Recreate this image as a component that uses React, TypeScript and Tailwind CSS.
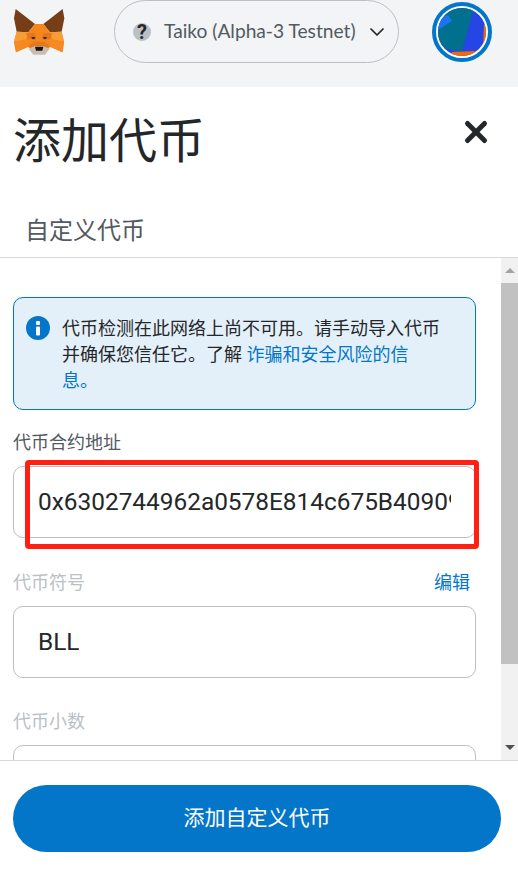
import { ChevronDown, X } from 'lucide-react'

function FoxLogo() {
  return (
    <svg width="80" height="70" viewBox="0 0 240 210">
      <polygon points="47,27 105,72 85,97 50,95 42,55" fill="#763D16" />
      <polygon points="188,27 130,72 150,97 185,95 193,55" fill="#763D16" />
      <polygon points="50,95 85,97 105,72 130,72 150,97 185,95 192,125 188,157 150,140 135,160 100,160 85,140 48,157 42,125" fill="#F6851B" />
      <polygon points="50,95 85,97 78,118 42,125" fill="#F89C35" />
      <polygon points="185,95 150,97 157,118 192,125" fill="#F89C35" />
      <polygon points="78,100 105,100 108,118 85,118" fill="#E2761B" />
      <polygon points="157,100 130,100 127,118 150,118" fill="#E2761B" />
      <polygon points="42,125 85,120 85,140 48,157" fill="#F58A24" />
      <polygon points="192,125 150,120 150,140 187,157" fill="#F58A24" />
      <polygon points="94,111 106,111 103,118 97,117" fill="#233447" />
      <polygon points="141,111 129,111 132,118 138,117" fill="#233447" />
      <polygon points="85,140 102,125 133,125 150,140 135,146 100,146" fill="#E4761B" />
      <polygon points="86,146 105,138 130,138 149,146 135,164 100,164" fill="#CDBBAD" />
      <polygon points="105,140 130,140 127,152 108,152" fill="#161616" />
    </svg>
  )
}

function AccountAvatar() {
  return (
    <div className="flex h-[60px] w-[60px] items-center justify-center rounded-full border-[4px] border-[#0376c9] bg-white">
      <svg width="48" height="48" viewBox="0 0 48 48" className="rounded-full">
        <rect width="48" height="48" fill="#2545e5" />
        <polygon points="0,0 36,0 24,43 7,41 0,35" fill="#01708f" />
        <polygon points="0,22 2,10 10,7 14,13" fill="#1c74ee" />
        <polygon points="14,44 39,43 45,40 46,16 48,16 48,48 14,48" fill="#f56a00" />
      </svg>
    </div>
  )
}

function Field({ label, value, muted, edit }: { label: string; value?: string; muted?: boolean; edit?: boolean }) {
  return (
    <div>
      <div className="flex items-center justify-between pr-[6px]">
        <span className={`text-[18px] leading-[24px] ${muted ? 'text-[#bbc0c5]' : 'text-[#535a61]'}`}>{label}</span>
        {edit && <span className="text-[18px] leading-[24px] text-[#0376c9]">编辑</span>}
      </div>
      <div className="mt-[11px] flex h-[72px] items-center overflow-hidden rounded-[10px] border border-[#bbc0c5] pl-[24px] pr-[24px]">
        <span className="min-w-0 overflow-hidden whitespace-nowrap text-[24.4px] text-[#24272a]">{value}</span>
      </div>
    </div>
  )
}

export default function App() {
  return (
    <div className="relative flex h-[876px] w-[518px] flex-col overflow-hidden bg-white font-['Roboto','Noto_Sans_CJK_SC',sans-serif] text-[#24272a]">
      {/* Header */}
      <header className="flex h-[87px] shrink-0 items-start bg-[#f2f4f6]">
        <FoxLogo />
        <button className="ml-[34px] flex h-[63px] w-[285px] items-center rounded-full border border-[#bbc0c5] pl-[18px]">
          <span className="flex h-[18px] w-[18px] items-center justify-center rounded-full bg-[#bbc0c5] text-[20px] font-bold leading-none text-[#24272a]">?</span>
          <span className="ml-[13px] whitespace-nowrap font-['Lato','Noto_Sans',sans-serif] text-[19.2px] text-[#535a61]">Taiko (Alpha-3 Testnet)</span>
          <ChevronDown className="ml-[9px] h-[24px] w-[24px] text-[#24272a]" strokeWidth={1.75} />
        </button>
        <div className="ml-[33px] mt-[2px]">
          <AccountAvatar />
        </div>
      </header>

      {/* Title */}
      <div className="flex h-[171px] shrink-0 flex-col border-b border-[#d6d9dc]">
        <div className="flex items-start justify-between pl-[13px] pr-[25px] pt-[21px]">
          <h1 className="text-[48px] font-normal leading-[68px]">添加代币</h1>
          <X className="mt-[7px] h-[34px] w-[34px] text-[#24272a]" strokeWidth={3.5} />
        </div>
        <div className="pl-[25px] pt-[38px] text-[24px] leading-[34px] text-[#535a61]">自定义代币</div>
      </div>

      {/* Scrolling form */}
      <div className="flex min-h-0 flex-1">
        <div className="w-[501px] shrink-0 overflow-hidden pl-[13px] pr-[25px] pt-[39px]">
          <div className="flex rounded-[10px] border border-[#0376c9] bg-[#e4f0f9] pb-[15px] pl-[12px] pr-[33px] pt-[18px]">
            <svg width="24" height="24" viewBox="0 0 24 24" className="shrink-0">
              <circle cx="12" cy="12" r="12" fill="#0376c9" />
              <rect x="10" y="5" width="4" height="4" rx="1" fill="#fff" />
              <rect x="10" y="10.5" width="4" height="9" rx="1" fill="#fff" />
            </svg>
            <p className="ml-[12px] text-[18px] leading-[26px] text-[#24272a]">
              代币检测在此网络上尚不可用。请手动导入代币并确保您信任它。了解 <span className="text-[#0376c9]">诈骗和安全风险的信息。</span>
            </p>
          </div>
          <div className="mt-[21px]">
            <Field label="代币合约地址" value="0x6302744962a0578E814c675B40909e0" />
          </div>
          <div className="mt-[33px]">
            <Field label="代币符号" value="BLL" muted edit />
          </div>
          <div className="mt-[32px]">
            <Field label="代币小数" muted />
          </div>
        </div>

        {/* Scrollbar */}
        <div className="flex w-[17px] shrink-0 flex-col items-center bg-[#f1f1f1]">
          <div className="flex h-[25px] w-full items-center justify-center">
            <div className="h-0 w-0 border-x-[5px] border-b-[5px] border-x-transparent border-b-[#a3a3a3]" />
          </div>
          <div className="h-[381px] w-full bg-[#c1c1c1]" />
          <div className="mt-auto flex h-[26px] w-full items-center justify-center">
            <div className="h-0 w-0 border-x-[5px] border-t-[5px] border-x-transparent border-t-[#505050]" />
          </div>
        </div>
      </div>

      {/* Footer */}
      <div className="flex h-[116px] shrink-0 items-start border-t border-[#d6d9dc] bg-white pl-[13px] pt-[24px]">
        <button className="h-[67px] w-[488px] rounded-full bg-[#0376c9] text-[21px] text-white">添加自定义代币</button>
      </div>

      {/* Annotation over the address field */}
      <div className="pointer-events-none absolute left-[25px] top-[460px] h-[89px] w-[454px] rounded-[4px] border-[5px] border-[#ff2013]" />
    </div>
  )
}
